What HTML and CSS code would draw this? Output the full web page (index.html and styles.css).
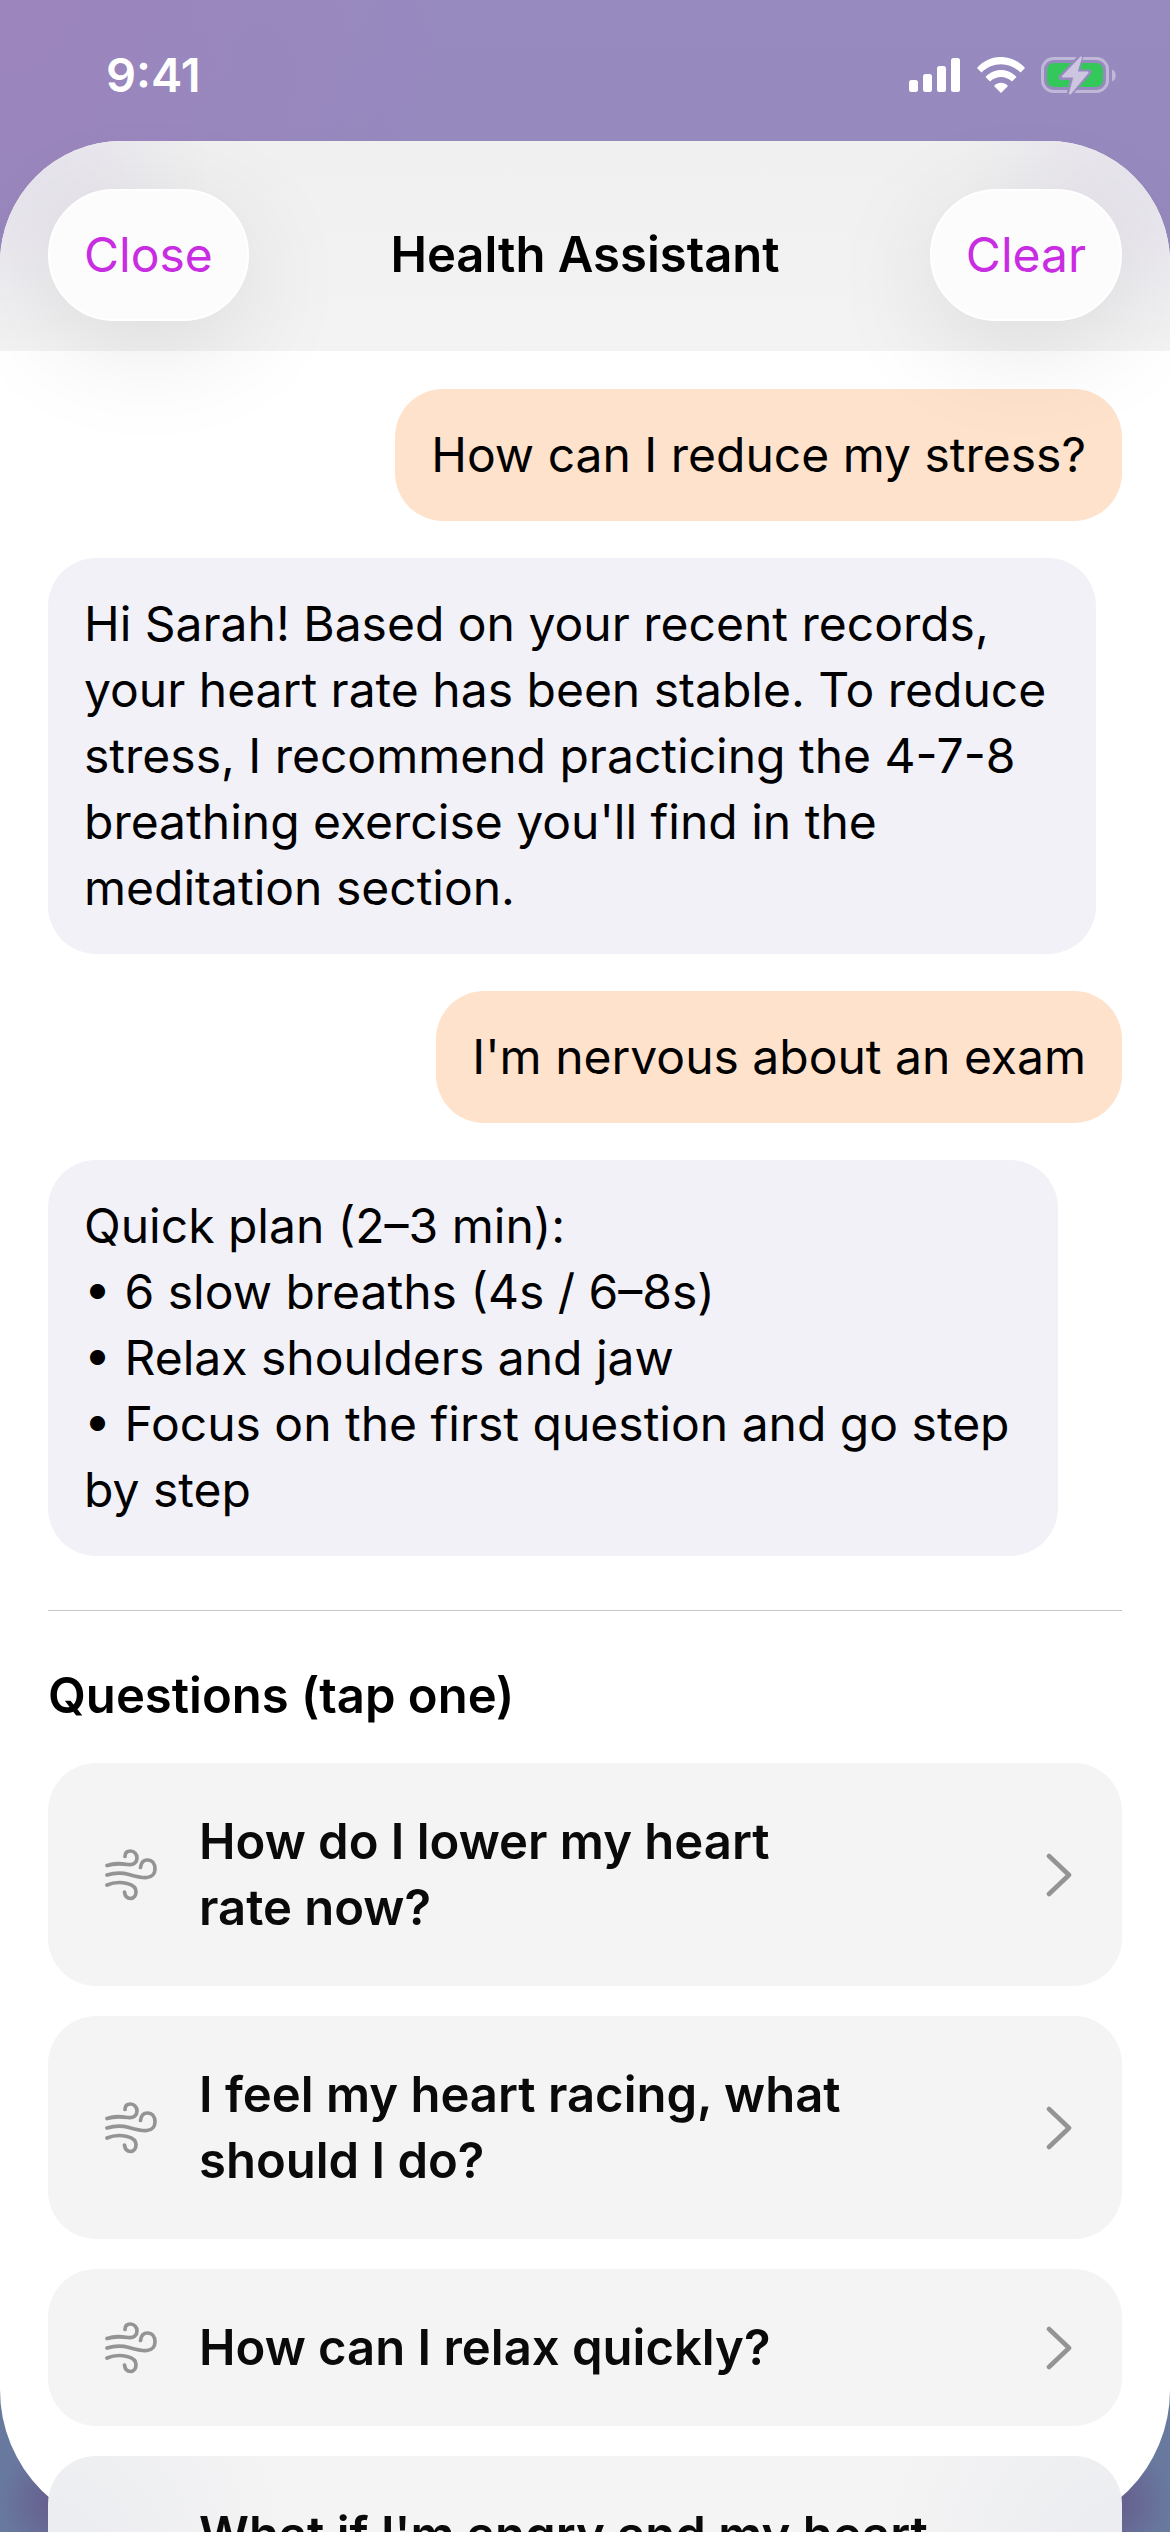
FILE: index.html
```html
<!DOCTYPE html>
<html lang="en">
<head>
<meta charset="utf-8">
<meta name="viewport" content="width=device-width, initial-scale=1">
<title>Health Assistant</title>
<link rel="stylesheet" href="styles.css">
</head>
<body>
<svg class="sprite" aria-hidden="true">
  <symbol id="wind" viewBox="0 0 52 52">
    <g stroke-width="3.7">
      <path d="M2 16.500C10 14 15 14.500 23 15.500C29 16.500 32 13 32 9C32 5 29 2 25.500 2C22 2 20 4 20 7.500"/>
      <path d="M2 26C10 23.500 17 23.500 24 25.500C31 27.500 36 29 42 28.500C47 28 50 24.500 50 20C50 14.500 47 11 42.500 11C38.500 11 36 14 35.500 18.500"/>
      <path d="M2 36C9 33 16 33 22 34.500C28 36 31 38.500 31 42.500C31 46.500 29 49.500 25.500 49.500C22 49.500 20 47 19.500 43"/>
    </g>
  </symbol>
  <symbol id="chevron" viewBox="0 0 26 44">
    <path d="M3 3L23 22L3 41" stroke-width="4.6"/>
  </symbol>
</svg>
<div class="app">
  <div class="status">
    <time class="clock">9:41</time>
    <div class="indicators">
      <svg class="signal" viewBox="0 0 52 34" aria-hidden="true">
        <rect x="0" y="22" width="9" height="12" rx="2.500"/>
        <rect x="14" y="16" width="9" height="18" rx="2.500"/>
        <rect x="28" y="8" width="9" height="26" rx="2.500"/>
        <rect x="42" y="0" width="9" height="34" rx="2.500"/>
      </svg>
      <svg class="wifi" viewBox="0 0 48 36" aria-hidden="true">
        <path d="M0 11C13-3.700 35-3.700 48 11L43.500 15.500C32.500 4.500 15.500 4.500 4.500 15.500Z"/>
        <path d="M8.500 20C17 10.700 31 10.700 39.500 20L35 24.500C28.500 18.500 19.500 18.500 13 24.500Z"/>
        <path d="M17 29C21 24.700 27 24.700 31 29L24 36Z"/>
      </svg>
      <svg class="battery" viewBox="0 0 76 42" aria-hidden="true">
        <rect class="battery-case" x="1.500" y="4.500" width="65" height="33" rx="11"/>
        <path class="battery-case-tip" d="M71 15.500C76 17 76 26 71 27.500Z"/>
        <rect class="battery-fill" x="6" y="9" width="56" height="24" rx="7"/>
        <path class="bolt-gap" d="M40 2L20 23.500H32L28 41L48 18H36Z"/>
        <path class="bolt" d="M40 3.500L22 22.500H33.500L29 39.500L46.500 18.500H35.500Z"/>
      </svg>
    </div>
  </div>

  <main class="sheet">
    <header class="bar">
      <button class="pill" type="button">Close</button>
      <h1 class="title">Health Assistant</h1>
      <button class="pill trailing" type="button">Clear</button>
    </header>

    <section class="chat">
      <p class="bubble user">How can I reduce my stress?</p>
      <p class="bubble reply">Hi Sarah! Based on your recent records, your heart rate has been stable. To reduce stress, I recommend practicing the 4-7-8 breathing exercise you'll find in the meditation section.</p>
      <p class="bubble user">I'm nervous about an exam</p>
      <p class="bubble reply plan">Quick plan (2–3 min):<br>• 6 slow breaths (4s / 6–8s)<br>• Relax shoulders and jaw<br>• Focus on the first question and go step by step</p>
    </section>

    <section class="questions">
      <h2 class="heading">Questions (tap one)</h2>
      <button class="card" type="button">
        <svg class="wind" aria-hidden="true"><use href="#wind"/></svg>
        <span class="label">How do I lower my heart<br>rate now?</span>
        <svg class="chevron" aria-hidden="true"><use href="#chevron"/></svg>
      </button>
      <button class="card" type="button">
        <svg class="wind" aria-hidden="true"><use href="#wind"/></svg>
        <span class="label">I feel my heart racing, what<br>should I do?</span>
        <svg class="chevron" aria-hidden="true"><use href="#chevron"/></svg>
      </button>
      <button class="card" type="button">
        <svg class="wind" aria-hidden="true"><use href="#wind"/></svg>
        <span class="label">How can I relax quickly?</span>
        <svg class="chevron" aria-hidden="true"><use href="#chevron"/></svg>
      </button>
      <button class="card edge" type="button">
        <svg class="wind" aria-hidden="true"><use href="#wind"/></svg>
        <span class="label">What if I'm angry and my heart<br>is racing?</span>
        <svg class="chevron" aria-hidden="true"><use href="#chevron"/></svg>
      </button>
    </section>
  </main>
</div>
</body>
</html>
```
FILE: styles.css
```css
* {
  box-sizing: border-box;
}

body {
  margin: 0;
  font-family: Inter, "Liberation Sans", sans-serif;
  font-size: 48px;
  line-height: 66px;
  color: #000;
}

h1, h2, p {
  margin: 0;
}

button {
  border: 0;
  font: inherit;
  color: inherit;
  cursor: pointer;
}

.sprite {
  display: none;
}

.app {
  display: flex;
  flex-direction: column;
  height: 100vh;
  overflow: hidden;
  background:
    radial-gradient(circle at 0 0, rgba(158, 130, 186, 0.7), rgba(158, 130, 186, 0) 440px),
    radial-gradient(circle at 60px calc(100% - 30px), #665a8c, rgba(102, 90, 140, 0) 60px),
    radial-gradient(circle at calc(100% - 60px) calc(100% - 30px), #665a8c, rgba(102, 90, 140, 0) 60px),
    linear-gradient(#978abf 0, #9488bd 300px, #68789f 2300px, #68799e 100%);
}

/* Status bar */
.status {
  flex: none;
  display: flex;
  justify-content: space-between;
  align-items: center;
  height: 141px;
  padding: 8px 53px 0 106px;
  color: #fff;
}

.clock {
  font-size: 47px;
  font-weight: 600;
}

.indicators {
  display: flex;
  align-items: center;
  gap: 16px;
}

.signal {
  width: 52px;
  height: 34px;
  fill: #fff;
}

.wifi {
  width: 48px;
  height: 36px;
  fill: #fff;
}

.battery {
  width: 76px;
  height: 42px;
}

.battery-case {
  fill: none;
  stroke: #c0b8d8;
  stroke-width: 3;
}

.battery-case-tip {
  fill: #c0b8d8;
}

.battery-fill {
  fill: #34c85a;
}

.bolt-gap {
  fill: #968abe;
  stroke: #968abe;
  stroke-width: 5;
  stroke-linejoin: round;
}

.bolt {
  fill: #cdc6e0;
  stroke: #cdc6e0;
  stroke-width: 2;
  stroke-linejoin: round;
}

/* Sheet */
.sheet {
  flex: 1;
  min-height: 0;
  border-radius: 122px 122px 142px 142px;
  background: #fff;
}

.bar {
  position: relative;
  z-index: 1;
  display: grid;
  grid-template-columns: 1fr auto 1fr;
  align-items: center;
  justify-items: start;
  padding: 48px 48px 30px;
  border-radius: 122px 122px 0 0;
  background:
    radial-gradient(circle at 0 0, rgba(226, 222, 234, 0.9), rgba(226, 222, 234, 0) 210px),
    radial-gradient(circle at 100% 0, rgba(226, 222, 234, 0.9), rgba(226, 222, 234, 0) 210px),
    linear-gradient(#f0f0f0, #f3f3f3);
}

.pill {
  height: 132px;
  padding: 0 34px;
  border: 2px solid #fff;
  border-radius: 66px;
  background: #fcfcfc;
  box-shadow: 0 24px 110px rgba(0, 0, 0, 0.1);
  color: #c92de2;
}

.trailing {
  justify-self: end;
}

.title {
  font-size: 49px;
  font-weight: 600;
}

/* Conversation */
.chat {
  display: flex;
  flex-direction: column;
  gap: 37px;
  margin: 0 48px;
  padding: 38px 0 54px;
  border-bottom: 1px solid #c6c6c8;
}

.bubble {
  max-width: 1048px;
  padding: 33px 36px;
  border-radius: 48px;
}

.user {
  align-self: flex-end;
  background: #fee2cb;
}

.reply {
  align-self: flex-start;
  background: #f2f1f7;
}

.plan {
  max-width: 1010px;
}

/* Suggested questions */
.questions {
  display: flex;
  flex-direction: column;
  gap: 30px;
  padding: 52px 48px 0;
}

.heading {
  margin-bottom: 4px;
  font-size: 49px;
  font-weight: 600;
}

.card {
  flex: none;
  display: flex;
  align-items: center;
  gap: 42px;
  padding: 46px 50px 45px 57px;
  border-radius: 48px;
  background: #f4f4f4;
  color: #0a0a0a;
  font-size: 49px;
  font-weight: 600;
  text-align: left;
}

.edge {
  background:
    radial-gradient(circle at 0 100px, #ebecf0, rgba(244, 244, 244, 0) 260px),
    radial-gradient(circle at 100% 100px, #ebecf0, rgba(244, 244, 244, 0) 260px),
    #f4f4f4;
}

.label {
  flex: 1;
}

.wind,
.chevron {
  flex: none;
  fill: none;
  stroke: #949494;
  stroke-linecap: round;
  stroke-linejoin: round;
}

.wind {
  width: 52px;
  height: 52px;
}

.chevron {
  width: 26px;
  height: 44px;
}
```
